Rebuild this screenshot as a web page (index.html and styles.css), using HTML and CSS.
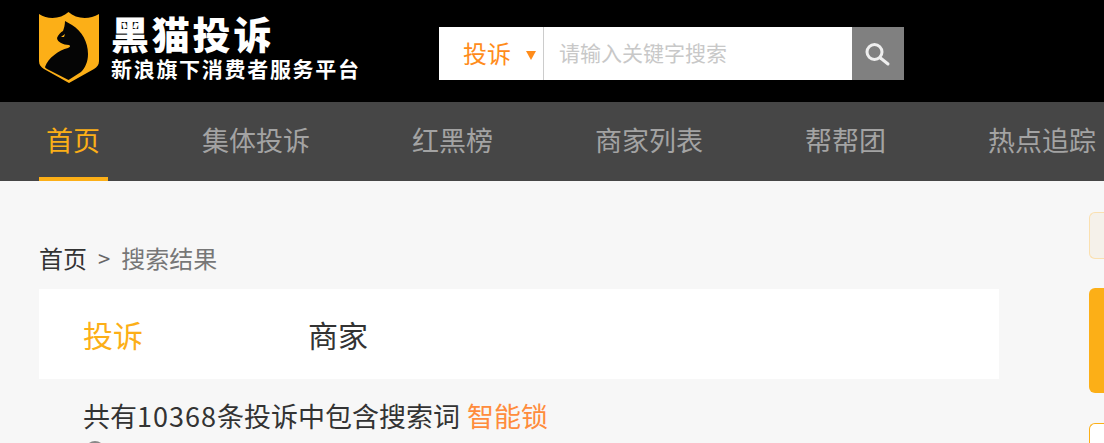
FILE: index.html
```html
<!DOCTYPE html>
<html lang="zh-CN">
<head>
  <meta charset="UTF-8" />
  <title>黑猫投诉</title>
  <link rel="stylesheet" href="styles.css">
</head>
<body>

  <header class="top">
    <div class="logo">
      <svg class="logo-mark" width="60" height="72" viewBox="0 0 60 72">
        <path fill="#fcaf17" d="M0 2C9 8 22 7 29.500 0C37 7 50 8 60 2V49C60 53 58 55 55 57L30 71L5 57C2 55 0 53 0 49Z"/>
        <path fill="#050505" d="M26 9L33 13C43 19 49 30 49 42C49 50 46 56 42 60L29.500 68L8 57C7 56 6 56 6 55C9 46 20 38 29 36C31 35 32 34 30 33C27 33 24 32 22 31C20 30 18 28 18 26C19 23 22 20 24 19C25 16 26 13 26 9Z"/>
        <path fill="#fcaf17" d="M22 25L26 22L25 25Z"/>
      </svg>
      <div class="logo-text">
        <div class="logo-name">黑猫投诉</div>
        <div class="logo-sub">新浪旗下消费者服务平台</div>
      </div>
    </div>

    <form class="search">
      <div class="search-type">投诉<span class="caret"></span></div>
      <input class="search-input" type="text" placeholder="请输入关键字搜索">
      <button class="search-btn" type="button">
        <svg width="26" height="26" viewBox="0 0 26 26" fill="none" stroke="#eeeeee" stroke-width="3" stroke-linecap="round">
          <circle cx="9.500" cy="11" r="7.500"/>
          <path d="M15.500 17L23 23"/>
        </svg>
      </button>
    </form>
  </header>

  <nav class="nav">
    <a class="active" href="#">首页</a>
    <a href="#">集体投诉</a>
    <a href="#">红黑榜</a>
    <a href="#">商家列表</a>
    <a href="#">帮帮团</a>
    <a href="#">热点追踪</a>
  </nav>

  <div class="page">
    <main class="content">
      <div class="crumbs">
        <a href="#">首页</a><span class="sep">&gt;</span><span class="here">搜索结果</span>
      </div>

      <div class="tabs">
        <a class="tab active" href="#">投诉</a>
        <a class="tab" href="#">商家</a>
      </div>

      <p class="summary">共有<span class="count">10368</span>条投诉中包含搜索词 <em>智能锁</em></p>
      <div class="avatar"></div>
    </main>

    <aside class="side">
      <div class="side-note"></div>
      <div class="side-banner"></div>
      <div class="side-card"></div>
    </aside>
  </div>

</body>
</html>
```

FILE: styles.css
```css
* {
  box-sizing: border-box;
}

html, body {
  height: 443px;
  overflow: hidden;
}

body {
  margin: 0;
  background-color: #f7f7f7;
  color: #333;
  font-family: "Noto Sans CJK SC", "Liberation Sans", sans-serif;
}

a {
  color: inherit;
  text-decoration: none;
}

/* top bar */
.top {
  display: flex;
  height: 102px;
  padding: 12px 0 0 39px;
  background-color: #000;
}

.logo {
  display: flex;
  gap: 12px;
  width: 400px;
  height: 72px;
}

.logo-text {
  color: #fff;
  white-space: nowrap;
}

.logo-name {
  font-size: 38px;
  font-weight: 900;
  line-height: 42px;
  letter-spacing: 2.800px;
}

.logo-sub {
  margin-top: 2px;
  font-size: 21px;
  font-weight: 700;
  line-height: 24px;
  letter-spacing: 1.700px;
}

.search {
  display: flex;
  width: 465px;
  height: 53px;
  margin: 15px 0 0 0;
  background-color: #fff;
}

.search-type {
  display: flex;
  align-items: center;
  width: 105px;
  padding: 0 0 2px 24px;
  border-right: 1px solid #ccc;
  color: #ff8c1a;
  font-size: 24px;
}

.caret {
  width: 0;
  height: 0;
  margin: 6px 0 0 15px;
  border-top: 9px solid #ff8c1a;
  border-left: 5.500px solid transparent;
  border-right: 5.500px solid transparent;
}

.search-input {
  flex: 1;
  min-width: 0;
  padding: 0 0 4px 15px;
  border: 0;
  outline: 0;
  background: transparent;
  font-family: inherit;
  font-size: 21px;
}

.search-input::placeholder {
  color: #c8c8c8;
  opacity: 1;
}

.search-btn {
  display: flex;
  align-items: center;
  justify-content: center;
  width: 52px;
  padding: 0;
  border: 0;
  background-color: #808080;
}

/* main nav */
.nav {
  display: flex;
  gap: 87px;
  height: 79px;
  padding-left: 39px;
  background-color: #464646;
  white-space: nowrap;
  overflow: hidden;
}

.nav a {
  padding: 0 8px 0 7px;
  color: #a3a3a3;
  font-size: 27px;
  line-height: 75px;
}

.nav a.active {
  border-bottom: 4px solid #fcaf17;
  color: #fcaf17;
}

/* page body */
.page {
  display: flex;
  height: 262px;
  padding-left: 39px;
  overflow: hidden;
}

.content {
  flex: none;
  width: 960px;
}

.crumbs {
  display: flex;
  align-items: center;
  height: 36px;
  margin-top: 58px;
  font-size: 24px;
}

.sep {
  margin: 0 11px;
  color: #666;
  font-size: 22px;
}

.here {
  color: #777;
}

.tabs {
  display: flex;
  height: 90px;
  margin-top: 14px;
  padding-left: 44px;
  background-color: #fff;
}

.tab {
  width: 225px;
  font-size: 30px;
  line-height: 90px;
}

.tab.active {
  color: #fcaf17;
}

.summary {
  margin: 18px 0 0 44px;
  font-size: 27px;
  line-height: 38px;
}

.count {
  letter-spacing: 1px;
}

.summary em {
  margin-left: 1px;
  color: #ff8c3c;
  font-style: normal;
}

.avatar {
  width: 20px;
  height: 20px;
  margin: 6px 0 0 46px;
  border-radius: 50%;
  background-color: #888;
}

/* right column, cut by the window */
.side {
  flex: none;
  width: 15px;
  margin-left: 90px;
  padding-top: 31px;
}

.side-note {
  height: 47px;
  border: 1px solid #fae0b0;
  border-right: 0;
  border-radius: 6px 0 0 6px;
  background-color: #f5f1ea;
}

.side-banner {
  height: 105px;
  margin-top: 29px;
  border-radius: 6px 0 0 6px;
  background-color: #fcaf17;
}

.side-card {
  height: 20px;
  margin-top: 30px;
  border: 1px solid #fcaf17;
  border-right: 0;
  border-bottom: 0;
  border-radius: 6px 0 0 0;
  background-color: #fff;
}
```
